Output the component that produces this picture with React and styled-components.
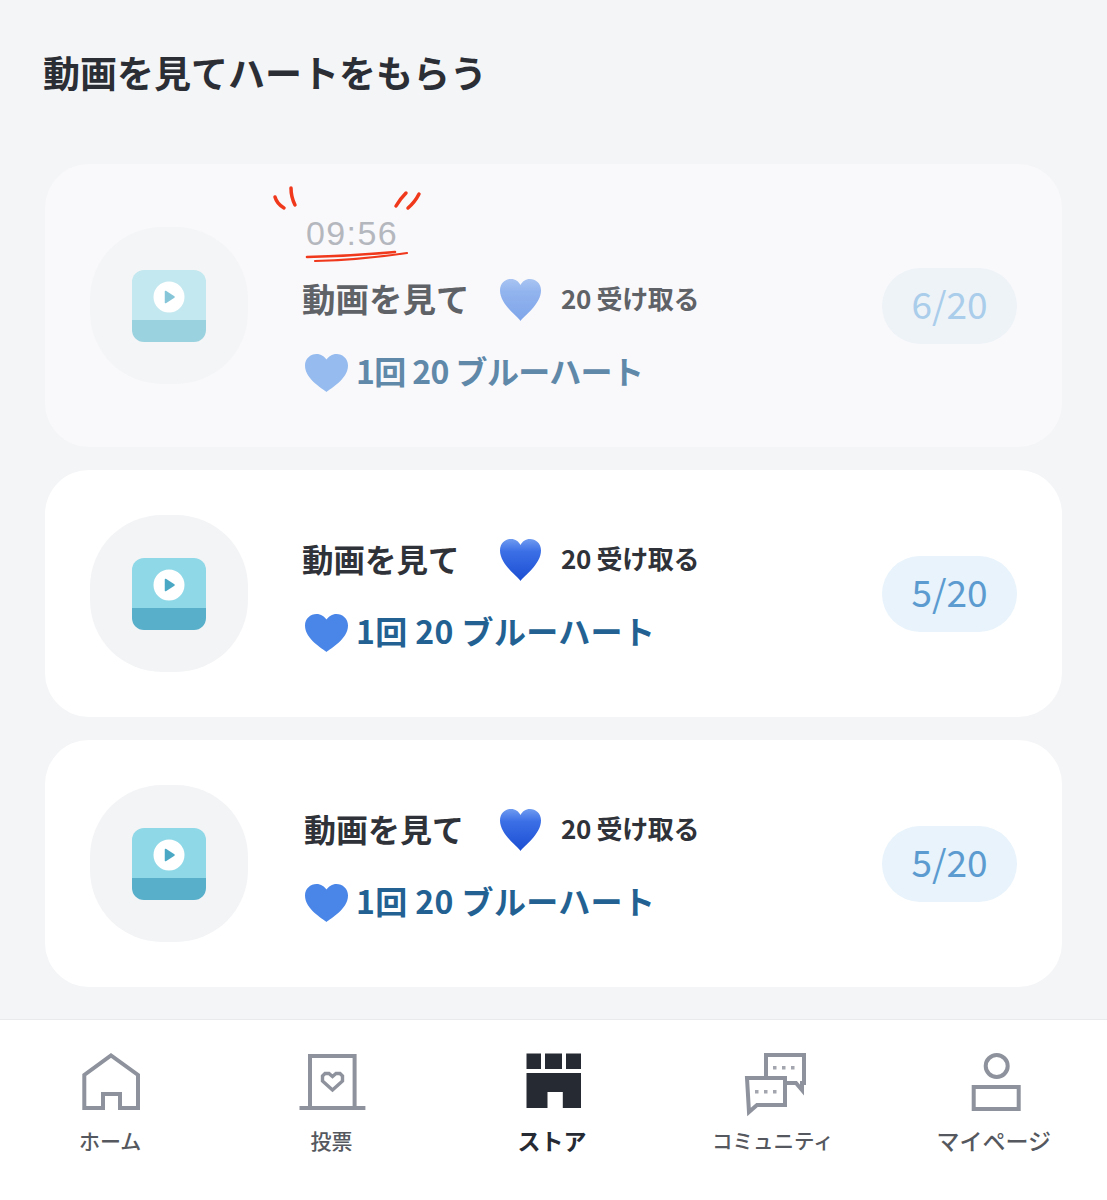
import React from "react";
import styled, { createGlobalStyle } from "styled-components";

const GlobalStyle = createGlobalStyle`
  html, body {
    margin: 0;
    padding: 0;
    background: #f4f5f7;
  }
  * {
    box-sizing: border-box;
  }
`;

const JP = `"Noto Sans CJK JP", "Noto Sans", sans-serif`;

const Page = styled.div`
  width: 1107px;
  height: 1200px;
  display: flex;
  flex-direction: column;
  background: #f4f5f7;
  font-family: ${JP};
  overflow: hidden;
`;

const Title = styled.h1`
  margin: 0;
  height: 164px;
  padding: 46px 0 0 43px;
  font-size: 37px;
  line-height: 52px;
  font-weight: 700;
  color: #2b2e35;
`;

const CardList = styled.div`
  display: flex;
  flex-direction: column;
  gap: 23px;
  padding: 0 45px;
`;

const Card = styled.div`
  position: relative;
  height: ${(p) => (p.$dim ? 283 : 247)}px;
  padding: 0 45px;
  display: flex;
  align-items: center;
  border-radius: 44px;
  background: ${(p) => (p.$dim ? "#f9f9fb" : "#ffffff")};
`;

const Thumb = styled.div`
  width: 158px;
  height: 157px;
  flex: none;
  display: flex;
  align-items: center;
  justify-content: center;
  padding-top: 3px;
  border-radius: 72px;
  background: ${(p) => (p.$dim ? "#f4f5f6" : "#f3f4f6")};
`;

const Content = styled.div`
  align-self: flex-start;
  flex: 1;
  margin-left: ${(p) => p.$left}px;
  padding-top: ${(p) => (p.$dim ? 49 : 68)}px;
  display: flex;
  flex-direction: column;
`;

const Timer = styled.div`
  height: 40px;
  margin: 0 0 25px 4px;
  font-family: "Liberation Sans", Arial, sans-serif;
  font-size: 34px;
  line-height: 40px;
  letter-spacing: 1.4px;
  color: #b5b7be;
`;

const Marks = styled.svg`
  position: absolute;
  left: 225px;
  top: 20px;
`;

const TopRow = styled.div`
  height: 44px;
  display: flex;
  align-items: center;
`;

const TaskName = styled.div`
  width: ${(p) => p.$width}px;
  flex: none;
  margin-bottom: 4px;
  font-size: ${(p) => p.$size}px;
  line-height: 40px;
  font-weight: 700;
  white-space: nowrap;
  color: ${(p) => (p.$dim ? "#5f6267" : "#2f3238")};
`;

const Reward = styled.div`
  margin: 0 0 4px 20px;
  font-size: 26px;
  line-height: 40px;
  font-weight: 700;
  white-space: nowrap;
  letter-spacing: -0.35px;
  color: ${(p) => (p.$dim ? "#5f6267" : "#2f3238")};
`;

const BottomRow = styled.div`
  height: 44px;
  margin: 28px 0 0 ${(p) => p.$left}px;
  display: flex;
  align-items: center;
  gap: 8px;
`;

const Limit = styled.div`
  margin-bottom: 4px;
  font-size: 32px;
  line-height: 40px;
  font-weight: 700;
  white-space: nowrap;
  letter-spacing: ${(p) => p.$spacing}px;
  color: ${(p) => (p.$dim ? "#5f88a9" : "#236193")};
`;

const Count = styled.div`
  width: 135px;
  height: 76px;
  flex: none;
  display: flex;
  align-items: center;
  justify-content: center;
  padding-bottom: 6px;
  border-radius: 38px;
  font-size: 37px;
  background: ${(p) => (p.$dim ? "#eef3f8" : "#e8f3fb")};
  color: ${(p) => (p.$dim ? "#a9cdea" : "#5b9bd0")};
`;

const TabBar = styled.nav`
  margin-top: auto;
  height: 181px;
  padding-top: 33px;
  display: grid;
  grid-template-columns: repeat(5, 1fr);
  background: #ffffff;
  border-top: 1px solid #e9eaec;
`;

const Tab = styled.div`
  display: flex;
  flex-direction: column;
  align-items: center;
`;

const TabIcon = styled.svg`
  display: block;
  width: 70px;
  height: 64px;
`;

const TabLabel = styled.span`
  margin: 7px ${(p) => p.$nudge || 0}px 0 0;
  font-size: ${(p) => p.$size}px;
  line-height: 32px;
  font-weight: ${(p) => (p.$active ? 700 : 500)};
  white-space: nowrap;
  color: ${(p) => (p.$active ? "#262a33" : "#55585e")};
`;

function VideoIcon({ dim }) {
  const top = dim ? "#c3e8ef" : "#8fd8e7";
  const band = dim ? "#9bd2e0" : "#57afca";
  const play = dim ? "#86c6d8" : "#4aa8c5";
  return (
    <svg width="74" height="74" viewBox="0 0 74 74">
      <path d="M12 0H62A12 12 0 0 1 74 12V50H0V12A12 12 0 0 1 12 0Z" fill={top} />
      <path d="M0 50H74V60A12 12 0 0 1 62 72H12A12 12 0 0 1 0 60Z" fill={band} />
      <circle cx="37" cy="27" r="15.5" fill="#fff" />
      <path d="M33.5 21.5L42 27L33.5 32.5Z" fill={play} stroke={play} strokeWidth="1.5" strokeLinejoin="round" />
    </svg>
  );
}

function GlossyHeart({ id, dim }) {
  return (
    <svg width="41" height="44" viewBox="0 0 41 44" style={{ flex: "none" }}>
      <defs>
        <linearGradient id={id} x1="0" y1="0" x2="0" y2="1">
          <stop offset="0" stopColor={dim ? "#a9c4f2" : "#6f9bf0"} />
          <stop offset="0.3" stopColor={dim ? "#92b4ee" : "#3b6fe6"} />
          <stop offset="1" stopColor={dim ? "#7fa5ea" : "#1c4ed2"} />
        </linearGradient>
      </defs>
      <path
        d="M20.5 43C17 38 0 26 0 12.5C0 5 5.5 1 11 1C15.5 1 18.8 3.6 20.5 7C22.2 3.6 25.5 1 30 1C35.5 1 41 5 41 12.5C41 26 24 38 20.5 43Z"
        fill={`url(#${id})`}
      />
    </svg>
  );
}

function FlatHeart({ dim }) {
  return (
    <svg width="43" height="38" viewBox="0 0 43 38" style={{ flex: "none", marginTop: 2 }}>
      <path
        d="M21.5 38C18 35 0 25 0 11.5C0 4.5 5.5 0 11.5 0C16 0 19.5 2.5 21.5 5.5C23.5 2.5 27 0 31.5 0C37.5 0 43 4.5 43 11.5C43 25 25 35 21.5 38Z"
        fill={dim ? "#95bbef" : "#4a86e8"}
      />
    </svg>
  );
}

function HomeIcon() {
  return (
    <TabIcon viewBox="0 0 70 64">
      <path
        d="M8.3 55V22L35 2.5L62 22V55H44V41H27V55Z"
        fill="none"
        stroke="#8e929c"
        strokeWidth="4"
      />
    </TabIcon>
  );
}

function VoteIcon() {
  return (
    <TabIcon viewBox="0 0 70 64">
      <path d="M13 55V3H57.6V55" fill="none" stroke="#8e929c" strokeWidth="4" />
      <path d="M2.5 55H68.4" stroke="#8e929c" strokeWidth="4" />
      <path
        d="M35.5 37L25.5 28V23L28 20.5H32L35.5 23.5L39 20.5H43L45.5 23V28Z"
        fill="none"
        stroke="#8e929c"
        strokeWidth="3.4"
      />
    </TabIcon>
  );
}

function StoreIcon() {
  return (
    <TabIcon viewBox="0 0 70 64">
      <path
        d="M8.5 0.5H23V16H8.5ZM27 0.5H44V16H27ZM48 0.5H63V16H48ZM8.5 20H63V55H44.8V39H29.5V55H8.5Z"
        fill="#262a33"
      />
    </TabIcon>
  );
}

function CommunityIcon() {
  return (
    <TabIcon viewBox="0 0 70 64">
      <path
        d="M26 24V2H64V30H62V37L56 30H45"
        fill="none"
        stroke="#8e929c"
        strokeWidth="4"
      />
      <path
        d="M7 25H45V52H17L9 59Z"
        fill="#fff"
        stroke="#8e929c"
        strokeWidth="4"
      />
      <path
        d="M33 13h3.5v3.5h-3.5zM42 13h3.5v3.5h-3.5zM51 13h3.5v3.5h-3.5zM15 37h3.5v3.5h-3.5zM24 37h3.5v3.5h-3.5zM33 37h3.5v3.5h-3.5z"
        fill="#a3a6ae"
      />
    </TabIcon>
  );
}

function MyPageIcon() {
  return (
    <TabIcon viewBox="0 0 70 64">
      <circle cx="35.7" cy="13" r="11" fill="none" stroke="#8e929c" strokeWidth="4" />
      <rect x="12.7" y="34" width="45" height="22" fill="none" stroke="#8e929c" strokeWidth="4" />
    </TabIcon>
  );
}

const cards = [
  { id: "a", dim: true, done: "6/20", left: 54, nameWidth: 198, nameSize: 33.5, limitLeft: 3, spacing: -0.6 },
  { id: "b", dim: false, done: "5/20", left: 54, nameWidth: 198, nameSize: 31.5, limitLeft: 3, spacing: 0.4 },
  { id: "c", dim: false, done: "5/20", left: 56, nameWidth: 196, nameSize: 32, limitLeft: 1, spacing: 0.4 },
];

const tabs = [
  { label: "ホーム", Icon: HomeIcon, size: 21, nudge: 1 },
  { label: "投票", Icon: VoteIcon, size: 21, nudge: 1 },
  { label: "ストア", Icon: StoreIcon, size: 23, nudge: 3, active: true },
  { label: "コミュニティ", Icon: CommunityIcon, size: 20.5, nudge: 4 },
  { label: "マイページ", Icon: MyPageIcon, size: 23, nudge: 5 },
];

export default function App() {
  return (
    <Page>
      <GlobalStyle />
      <Title>動画を見てハートをもらう</Title>
      <CardList>
        {cards.map((card) => (
          <Card key={card.id} $dim={card.dim}>
            <Thumb $dim={card.dim}>
              <VideoIcon dim={card.dim} />
            </Thumb>
            <Content $dim={card.dim} $left={card.left}>
              {card.dim && <Timer>09:56</Timer>}
              <TopRow>
                <TaskName $dim={card.dim} $width={card.nameWidth} $size={card.nameSize}>
                  動画を見て
                </TaskName>
                <GlossyHeart id={`heart-${card.id}`} dim={card.dim} />
                <Reward $dim={card.dim}>20 受け取る</Reward>
              </TopRow>
              <BottomRow $left={card.limitLeft}>
                <FlatHeart dim={card.dim} />
                <Limit $dim={card.dim} $spacing={card.spacing}>
                  1回 20 ブルーハート
                </Limit>
              </BottomRow>
            </Content>
            <Count $dim={card.dim}>{card.done}</Count>
            {card.dim && (
              <Marks width="160" height="90" viewBox="0 0 160 90">
                <g fill="none" stroke="#f0391c" strokeLinecap="round">
                  <path d="M5 13Q7 20 14 24" strokeWidth="3.5" />
                  <path d="M21 4Q21 13 25 21" strokeWidth="3.5" />
                  <path d="M126 22Q130 15 136 9" strokeWidth="3.5" />
                  <path d="M138 24Q145 18 149 10" strokeWidth="3.5" />
                  <path d="M37 73Q80 72 125 68" strokeWidth="2.6" />
                  <path d="M45 77Q90 76 137 69" strokeWidth="2.2" />
                </g>
              </Marks>
            )}
          </Card>
        ))}
      </CardList>
      <TabBar>
        {tabs.map(({ label, Icon, size, nudge, active }) => (
          <Tab key={label}>
            <Icon />
            <TabLabel $size={size} $nudge={nudge} $active={active}>
              {label}
            </TabLabel>
          </Tab>
        ))}
      </TabBar>
    </Page>
  );
}
